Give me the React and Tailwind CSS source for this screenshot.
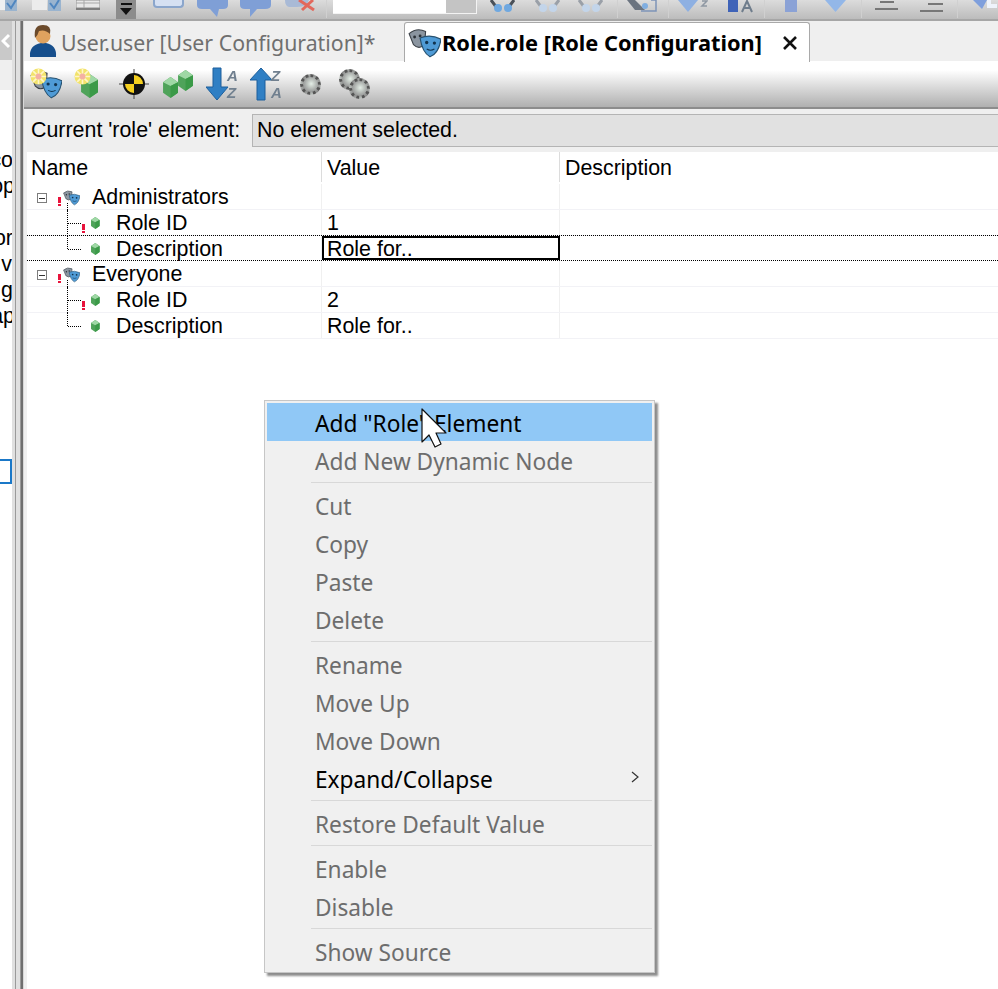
const ROWS = [
  { name: 'Administrators', value: '', kind: 'role' },
  { name: 'Role ID', value: '1', kind: 'attr', error: true, tree: 'mid' },
  { name: 'Description', value: 'Role for..', kind: 'attr', tree: 'end', selected: true },
  { name: 'Everyone', value: '', kind: 'role' },
  { name: 'Role ID', value: '2', kind: 'attr', error: true, tree: 'mid' },
  { name: 'Description', value: 'Role for..', kind: 'attr', tree: 'end' },
];

const MENU = [
  [{ label: 'Add "Role" Element', active: true }, { label: 'Add New Dynamic Node' }],
  [{ label: 'Cut' }, { label: 'Copy' }, { label: 'Paste' }, { label: 'Delete' }],
  [{ label: 'Rename' }, { label: 'Move Up' }, { label: 'Move Down' }, { label: 'Expand/Collapse', enabled: true, submenu: true }],
  [{ label: 'Restore Default Value' }],
  [{ label: 'Enable' }, { label: 'Disable' }],
  [{ label: 'Show Source' }],
];

function Masks({ size = 30, className = '' }) {
  return (
    <svg width={size} height={size} viewBox="0 0 30 30" className={className}>
      <path d="M1 7 Q8 1 16 5 L15 17 Q10 22 5 17 Z" fill="#8b95a0" stroke="#3b4148" />
      <path d="M11 11 Q20 7 30 12 Q28 25 20 28 Q13 24 11 11 Z" fill="#4f9bd6" stroke="#25506f" />
      <circle cx="17" cy="15" r="1.500" fill="#12344f" />
      <circle cx="24" cy="15.500" r="1.500" fill="#12344f" />
      <path d="M17 21 Q20.500 23 24 21" stroke="#12344f" fill="none" />
      <circle cx="6" cy="10" r="1.300" fill="#2c3238" />
      <circle cx="11" cy="9" r="1.300" fill="#2c3238" />
    </svg>
  );
}

function Gem({ size = 14, className = '' }) {
  return (
    <svg width={size * 0.72} height={size} viewBox="0 0 10 14" className={className}>
      <path d="M5 0 L10 3.500 L10 10.500 L5 14 L0 10.500 L0 3.500 Z" fill="#4fa35a" />
      <path d="M5 0 L10 3.500 L5 6 L0 3.500 Z" fill="#9fd8a5" />
      <path d="M5 6 L10 3.500 L10 10.500 L5 14 Z" fill="#3b9a48" />
    </svg>
  );
}

function Spark({ className = '' }) {
  return (
    <svg width="17" height="17" viewBox="0 0 16 16" className={className}>
      <circle cx="8" cy="8" r="7.500" fill="#f2e36b" />
      <path d="M8 1 V15 M1 8 H15 M3 3 L13 13 M13 3 L3 13" stroke="#fff6c8" strokeWidth="1.500" />
      <circle cx="8" cy="8" r="2.800" fill="#f4b1a3" />
    </svg>
  );
}

function SortIcon({ up }) {
  return (
    <svg width="34" height="34" viewBox="0 0 34 34" fontFamily="Liberation Sans, sans-serif" fontWeight="700" fontStyle="italic" fontSize="15" fill="#71808f">
      {up ? (
        <path d="M11 1 L22 13 L15 13 L15 33 L7 33 L7 13 L0 13 Z" fill="#2f7fc4" stroke="#1d5f9c" />
      ) : (
        <path d="M7 1 L15 1 L15 20 L22 20 L11 33 L0 20 L7 20 Z" fill="#2f7fc4" stroke="#1d5f9c" />
      )}
      <text x="21" y="14">{up ? 'Z' : 'A'}</text>
      <text x="21" y="31">{up ? 'A' : 'Z'}</text>
    </svg>
  );
}

function Dot({ className = '' }) {
  return (
    <span className={`block w-[21px] h-[21px] rounded-full border-[3px] border-dotted border-[#555] bg-[radial-gradient(circle_at_55%_45%,#e4eee6_0%,#a7aaa8_55%,#7d7d7d_100%)] ${className}`} />
  );
}

function Glasses({ dark, className = '' }) {
  const line = dark ? '#4a5058' : '#9aa0a8';
  return (
    <svg width="25" height="14" viewBox="0 0 25 14" className={className}>
      <path d="M1 0 L7 8 M24 0 L18 8" stroke={line} strokeWidth="3" />
      <circle cx="8" cy="8" r="4" fill={dark ? '#6fa8e0' : '#c3d5ea'} />
      <circle cx="18" cy="8" r="4" fill={dark ? '#6fa8e0' : '#c3d5ea'} />
    </svg>
  );
}

function Bubble({ flip, className = '' }) {
  return (
    <svg width="31" height="20" viewBox="0 0 31 20" className={className}>
      <path d={flip ? 'M0 0 H31 V5 Q31 9 25 9 H17 L10 17 L10 9 H5 Q0 9 0 5 Z' : 'M0 0 H31 V5 Q31 9 26 9 H22 L20 17 L13 9 H5 Q0 9 0 5 Z'} fill="#7f9fd6" />
    </svg>
  );
}

function Sep({ className = '' }) {
  return <span className={`w-px h-[18px] bg-[#d0d0d0] shrink-0 ${className}`} />;
}

function TopToolbar() {
  return (
    <div className="h-[21px] flex items-start overflow-hidden bg-gradient-to-b from-[#dcdcdc] to-[#bcbcbc] border-b-2 border-[#a6a6a6]">
      <svg width="18" height="12" viewBox="0 0 18 12" className="shrink-0 blur-[0.4px]">
        <rect x="0" y="0" width="5" height="10" fill="#eef0f2" />
        <rect x="5" y="0" width="12" height="11" fill="#9ab4cf" />
        <path d="M7 3 L11 8 L16 0" stroke="#4f86c0" strokeWidth="2" fill="none" />
      </svg>
      <svg width="30" height="12" viewBox="0 0 30 12" className="ml-[14px] shrink-0 blur-[0.4px]">
        <rect x="0" y="0" width="15" height="10" fill="#ececec" />
        <rect x="16" y="0" width="13" height="11" fill="#9ab4cf" />
        <path d="M18 3 L22 8 L27 0" stroke="#4f86c0" strokeWidth="2" fill="none" />
      </svg>
      <svg width="24" height="10" viewBox="0 0 24 10" className="ml-[14px] shrink-0 blur-[0.4px]">
        <rect x="0" y="0" width="24" height="8" fill="#e8e8e8" stroke="#8f8f8f" />
        <path d="M8 0 V8 M0 3 H24" stroke="#a8a8a8" />
        <rect x="0" y="8" width="24" height="2" fill="#7e7e7e" />
      </svg>
      <span className="ml-[16px] w-[20px] h-[19px] bg-[#8c8c8c] shrink-0 flex flex-col items-center pt-[3px]">
        <span className="w-[11px] h-[2px] bg-[#111]" />
        <svg width="12" height="7" viewBox="0 0 12 7" className="mt-[3px]"><path d="M0 0 H12 L6 7 Z" fill="#111" /></svg>
      </span>
      <span className="ml-[17px] w-[31px] h-[8px] shrink-0 rounded-b-[4px] border-2 border-t-0 border-[#8ba6cc] bg-[#d5e0f2]" />
      <Bubble className="ml-[13px] shrink-0 blur-[0.4px]" />
      <Bubble flip className="ml-[12px] shrink-0 blur-[0.4px]" />
      <svg width="31" height="12" viewBox="0 0 31 12" className="ml-[14px] shrink-0 blur-[0.4px]">
        <path d="M0 0 H24 Q22 7 12 7 H4 Q0 6 0 0 Z" fill="#a9bad6" />
        <path d="M14 0 L29 10 M28 0 L17 10" stroke="#e2685c" strokeWidth="3" />
      </svg>
      <Sep className="ml-[10px]" />
      <div className="ml-[6px] w-[144px] h-[14px] shrink-0 bg-white border-r border-b border-[#f3f3f3] flex justify-end">
        <span className="w-[30px] h-full bg-[#c4c4c4]" />
      </div>
      <Glasses dark className="ml-[13px] shrink-0 blur-[0.4px]" />
      <Glasses className="ml-[20px] shrink-0 blur-[0.4px]" />
      <Glasses className="ml-[18px] shrink-0 blur-[0.4px]" />
      <Sep className="ml-[14px]" />
      <svg width="30" height="12" viewBox="0 0 30 12" className="ml-[9px] shrink-0 blur-[0.4px]">
        <path d="M0 0 L8 0 L18 10 L8 10 Z" fill="#6b7480" />
        <circle cx="18" cy="6" r="3" fill="#80aee0" />
        <path d="M24 0 H29 V11 H14" stroke="#7d94b8" fill="none" strokeWidth="1.500" />
      </svg>
      <Sep className="ml-[11px]" />
      <svg width="30" height="13" viewBox="0 0 30 13" className="ml-[9px] shrink-0 blur-[0.4px]">
        <path d="M0 0 H20 L10 12 Z" fill="#8eb0e2" />
        <path d="M24 1 H29 L24 6 H29" stroke="#8f98a3" fill="none" strokeWidth="1.500" />
      </svg>
      <svg width="27" height="13" viewBox="0 0 27 13" className="ml-[20px] shrink-0 blur-[0.4px]">
        <rect x="0" y="0" width="10" height="12" fill="#3f63b8" />
        <path d="M14 12 L19 1 L24 12 M16 8 H22" stroke="#6f7d8c" strokeWidth="2" fill="none" />
      </svg>
      <Sep className="ml-[9px]" />
      <span className="ml-[20px] w-[12px] h-[12px] shrink-0 bg-[#8ba2d6]" />
      <svg width="21" height="12" viewBox="0 0 21 12" className="ml-[28px] shrink-0 blur-[0.4px]">
        <path d="M0 0 H21 L10.500 12 Z" fill="#93b7e8" />
      </svg>
      <Sep className="ml-[15px]" />
      <span className="ml-[13px] w-[23px] h-[10px] shrink-0 flex flex-col justify-between pt-[1px]">
        <span className="h-[2px] w-[14px] self-center bg-[#777]" />
        <span className="h-[2px] bg-[#777]" />
      </span>
      <span className="ml-[22px] w-[23px] h-[12px] shrink-0 flex flex-col justify-end gap-[5px]">
        <span className="h-[2px] w-[15px] self-end bg-[#777]" />
        <span className="h-[2px] bg-[#777]" />
      </span>
      <Sep className="ml-[14px]" />
      <svg width="25" height="13" viewBox="0 0 25 13" className="ml-[15px] shrink-0 blur-[0.4px]">
        <path d="M0 0 H14 L9 9 Z" fill="#7f9fdc" />
        <path d="M16 0 V6 H24" stroke="#eef3fb" strokeWidth="4" fill="none" />
      </svg>
    </div>
  );
}

function Tabs() {
  return (
    <div className="h-[40px] flex items-end bg-[#efefef] pl-[5px]">
      <div className="h-[40px] w-[375px] shrink-0 flex items-center pt-[3px] text-[#6f6f6f] text-[21.300px] font-['Noto_Sans',sans-serif] whitespace-nowrap">
        <svg width="28" height="34" viewBox="0 0 28 34" className="mr-[4px] -mt-[3px] blur-[0.3px]">
          <path d="M1 33 Q0 21 12 19 H17 Q28 21 27 33 Z" fill="#174f8c" />
          <circle cx="14" cy="12" r="7.500" fill="#dfa25f" />
          <path d="M6 14 Q4 1 14 1 Q23 1 21 10 Q16 5 10 7 Q9 11 6 14 Z" fill="#6b4a2b" />
        </svg>
        User.user [User Configuration]*
      </div>
      <div className="h-[40px] w-[406px] shrink-0 -mb-[1px] z-10 bg-white border border-b-0 border-[#a9a9a9] rounded-t-[3px] flex items-center text-black text-[21.800px] font-bold font-['Noto_Sans',sans-serif] whitespace-nowrap pl-[3px]">
        <Masks size={33} />
        <span className="ml-[1px] pt-[2px]">Role.role [Role Configuration]</span>
        <svg width="16" height="16" viewBox="0 0 16 16" className="ml-[20px]">
          <path d="M2 2 L14 14 M14 2 L2 14" stroke="#111" strokeWidth="2.600" />
        </svg>
      </div>
    </div>
  );
}

function EditorToolbar() {
  return (
    <div className="h-[48px] flex items-center pl-[6px] bg-gradient-to-b from-white from-[20%] to-[#b0b0b0] border-b-2 border-[#8c8c8c]">
      <div className="relative w-[33px] h-[32px] shrink-0 blur-[0.4px]">
        <Masks size={32} />
        <Spark className="absolute left-0 top-0" />
      </div>
      <div className="relative w-[26px] h-[32px] ml-[11px] shrink-0 blur-[0.4px]">
        <Gem size={24} className="absolute left-[7px] top-[6px]" />
        <Spark className="absolute left-0 top-0" />
      </div>
      <svg width="32" height="32" viewBox="0 0 32 32" className="ml-[18px] shrink-0 blur-[0.4px]">
        <path d="M16 1 V31 M1 16 H31" stroke="#444" />
        <circle cx="16" cy="16" r="11" fill="#111" />
        <path d="M16 16 V7 A9 9 0 0 1 25 16 Z M16 16 V25 A9 9 0 0 1 7 16 Z" fill="#f4cf1f" />
      </svg>
      <div className="relative w-[31px] h-[28px] ml-[13px] shrink-0 blur-[0.3px]">
        <Gem size={21} className="absolute left-0 bottom-0" />
        <Gem size={21} className="absolute right-[1px] top-0" />
      </div>
      <div className="ml-[12px] shrink-0 blur-[0.3px]"><SortIcon /></div>
      <div className="ml-[10px] shrink-0 blur-[0.3px]"><SortIcon up /></div>
      <Dot className="ml-[16px] shrink-0 blur-[0.3px]" />
      <div className="relative w-[31px] h-[30px] ml-[18px] shrink-0 blur-[0.3px]">
        <Dot className="absolute left-0 top-0" />
        <Dot className="absolute right-0 bottom-0" />
      </div>
    </div>
  );
}

function Bang({ className = '' }) {
  return (
    <span className={`absolute w-[3px] flex flex-col items-center gap-px ${className}`}>
      <span className="w-[3px] h-[6px] bg-[#e8133c]" />
      <span className="w-[3px] h-[2px] bg-[#e8133c]" />
    </span>
  );
}

function TreeGlyph({ row }) {
  if (row.kind === 'role') {
    return (
      <div className="relative w-[65px] h-full shrink-0">
        <span className="absolute left-[10px] top-[9px] w-[10px] h-[10px] border border-[#7d7d7d] flex items-center justify-center bg-white">
          <span className="w-[6px] h-px bg-[#333]" />
        </span>
        <Bang className="left-[31px] top-[13px]" />
        <span className="absolute left-[40px] top-[19px] h-[7px] border-l border-dotted border-black" />
        <Masks size={17} className="absolute left-[36px] top-[5px]" />
      </div>
    );
  }
  return (
    <div className="relative w-[89px] h-full shrink-0">
      <span className={`absolute left-[40px] top-0 border-l border-dotted border-black ${row.tree === 'end' ? 'h-[13px]' : 'h-[26px]'}`} />
      <span className="absolute left-[41px] top-[13px] w-[13px] border-t border-dotted border-black" />
      {row.error && <Bang className="left-[55px] top-[14px]" />}
      <Gem size={12} className="absolute left-[64px] top-[7px]" />
    </div>
  );
}

function TreeTable() {
  return (
    <div className="flex-1 border-l-[3px] border-[#f0f0f0] font-['Liberation_Sans',sans-serif] text-[21.400px] text-black bg-white">
      <div className="h-[32px] flex">
        <div className="w-[295px] h-[30px] pl-[4px] border-r border-[#dcdcdc] leading-[32px]">Name</div>
        <div className="w-[238px] h-[30px] pl-[5px] border-r border-[#dcdcdc] leading-[32px]">Value</div>
        <div className="flex-1 pl-[5px] leading-[32px]">Description</div>
      </div>
      {ROWS.map((row, i) => (
        <div
          key={i}
          className={`flex ${row.selected ? 'h-[26px] -mt-px border-y border-dotted border-black' : 'h-[26px] border-b border-[#f2f2f6]'}`}
        >
          <div className="w-[295px] h-full flex items-center border-r border-[#f0f0f0] whitespace-nowrap">
            <TreeGlyph row={row} />
            <span className="pt-[2px]">{row.name}</span>
          </div>
          <div className={`w-[238px] h-full flex items-center whitespace-nowrap ${row.selected ? 'border-2 border-black pl-[3px]' : 'pl-[5px] border-r border-[#f0f0f0]'}`}>
            <span className="pt-[2px]">{row.value}</span>
          </div>
          <div className="flex-1" />
        </div>
      ))}
    </div>
  );
}

function Cursor() {
  return (
    <svg width="27" height="42" viewBox="0 0 27 42" className="absolute left-[156px] top-[5px] z-20">
      <path d="M1 3 L1 36 L8 29 L14 41 L20 38 L15 27 L25 27 Z" fill="#fff" stroke="#111" strokeWidth="1.200" strokeLinejoin="round" />
    </svg>
  );
}

function ContextMenu() {
  return (
    <div className="absolute left-[264px] top-[400px] z-10 w-[391px] h-[573px] bg-[#f0f0f0] border border-[#c6c6c6] p-[2px] shadow-[3px_3px_2px_rgba(0,0,0,0.45)] font-['Noto_Sans',sans-serif] text-[22.700px] whitespace-nowrap">
      <Cursor />
      {MENU.map((group, g) => (
        <div key={g} className={g > 0 ? 'ml-[44px] border-t border-[#d8d8d8] mt-[3px] pt-[3px]' : ''}>
          {group.map(item => (
            <div
              key={item.label}
              className={`h-[38px] pt-[4px] flex items-center justify-between ${g > 0 ? '-ml-[44px] pl-[48px]' : 'pl-[48px]'} ${item.active ? 'bg-[#90c8f6] text-black' : item.enabled ? 'text-black' : 'text-[#6d6d6d]'}`}
            >
              {item.label}
              {item.submenu && (
                <svg width="10" height="14" viewBox="0 0 10 14" className="mr-[12px] -mt-[6px]">
                  <path d="M2 2 L8 7 L2 12" stroke="#333" fill="none" strokeWidth="1.200" />
                </svg>
              )}
            </div>
          ))}
        </div>
      ))}
    </div>
  );
}

function SidePanel() {
  return (
    <div className="w-[24px] shrink-0 flex bg-white">
      <div className="w-[12px] flex flex-col font-['Liberation_Sans',sans-serif] text-[21.400px] text-black overflow-hidden whitespace-nowrap">
        <div className="h-[39px] bg-[#c9c9c9] flex items-center justify-center">
          <svg width="10" height="16" viewBox="0 0 10 16"><path d="M8 2 L2 8 L8 14" stroke="#fff" strokeWidth="3" fill="none" /></svg>
        </div>
        <div className="h-[30px] bg-[#efefef]" />
        <div className="pt-[57px] leading-[26px] flex flex-col items-end">
          <span className="-mr-[1px]">co</span>
          <span className="-mr-[3px]">op</span>
          <span className="h-[26px]" />
          <span className="-mr-[1px]">or</span>
          <span>v</span>
          <span className="-mr-[1px]">g</span>
          <span className="-mr-[3px]">ap</span>
        </div>
        <div className="mt-[130px] h-[25px] border-y-2 border-r-2 border-[#1a78c8] bg-white" />
      </div>
      <div className="w-[12px] flex">
        <span className="w-[3px] bg-[#e0e0e0]" />
        <span className="w-[1px] bg-[#9a9a9a]" />
        <span className="w-[4px] bg-[#e0e0e0]" />
        <span className="w-[1px] bg-[#9a9a9a]" />
        <span className="w-[2px] bg-[#6f6f6f]" />
        <span className="w-[1px] bg-[#d8d8d8]" />
      </div>
    </div>
  );
}

export default function App() {
  return (
    <div className="relative w-[998px] h-[989px] overflow-hidden bg-white">
      <TopToolbar />
      <div className="flex h-[968px]">
        <SidePanel />
        <div className="flex-1 min-w-0 flex flex-col">
          <Tabs />
          <EditorToolbar />
          <div className="h-[43px] shrink-0 flex items-center bg-[#efefef] pl-[7px] pb-[1px] font-['Liberation_Sans',sans-serif] text-[21.400px] text-black">
            <span className="w-[221px] shrink-0 whitespace-nowrap">Current 'role' element:</span>
            <div className="flex-1 h-[33px] flex items-center pl-[4px] bg-[#e1e1e1] border border-r-0 border-[#b4b4b4]">No element selected.</div>
          </div>
          <TreeTable />
        </div>
      </div>
      <ContextMenu />
    </div>
  );
}
